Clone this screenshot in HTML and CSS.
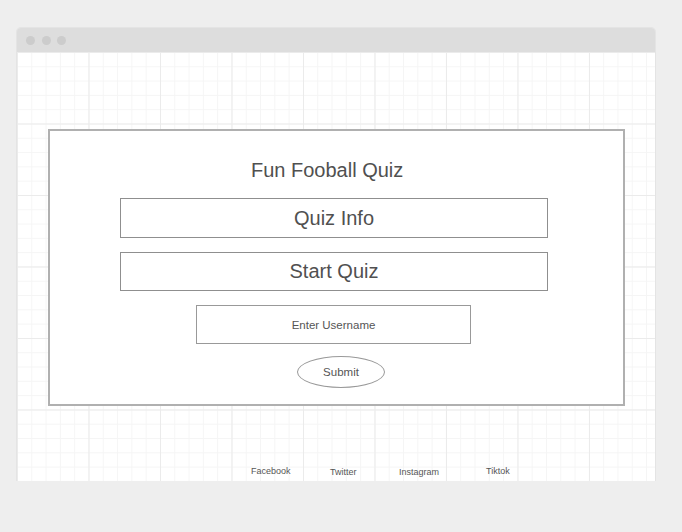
FILE: index.html
```html
<!DOCTYPE html>
<html>
<head>
<meta charset="utf-8">
<link rel="stylesheet" href="styles.css">
</head>
<body>
<div class="window">
  <div class="titlebar">
    <span class="dot"></span><span class="dot"></span><span class="dot"></span>
  </div>
  <div class="canvas">
    <div class="card">
      <h1 class="title">Fun Fooball Quiz</h1>
      <div class="big-btn">Quiz Info</div>
      <div class="big-btn start">Start Quiz</div>
      <div class="input">Enter Username</div>
      <div class="submit">Submit</div>
    </div>
    <div class="footer">
      <span class="link">Facebook</span>
      <span class="link low">Twitter</span>
      <span class="link low">Instagram</span>
      <span class="link">Tiktok</span>
    </div>
  </div>
</div>
</body>
</html>
```

FILE: styles.css
```css
html, body {
  margin: 0;
  padding: 0;
  background: #eeeeee;
  font-family: "Liberation Sans", Arial, sans-serif;
  color: #505050;
}
.window {
  margin: 28px 0 0 17px;
  width: 638px;
  height: 453px;
  border-radius: 4px 4px 0 0;
  overflow: hidden;
  box-shadow: 0 0 0 1px #e4e4e4;
  display: flex;
  flex-direction: column;
}
.titlebar {
  height: 24px;
  background: #dddddd;
  display: flex;
  align-items: center;
  padding-left: 9px;
  gap: 6.6px;
}
.dot {
  width: 9px;
  height: 9px;
  border-radius: 50%;
  background: #cccccc;
}
.canvas {
  flex: 1;
  background-color: #ffffff;
  background-image:
    linear-gradient(to right, #ebebeb 1px, transparent 1px),
    linear-gradient(to bottom, #ebebeb 1px, transparent 1px),
    linear-gradient(to right, #f5f5f5 1px, transparent 1px),
    linear-gradient(to bottom, #f5f5f5 1px, transparent 1px);
  background-size: 71.5px 71.5px, 71.5px 71.5px, 14.3px 14.3px, 14.3px 14.3px;
  display: flex;
  flex-direction: column;
}
.card {
  margin: 77px 0 0 31px;
  width: 573px;
  height: 273px;
  border: 2px solid #b0b0b0;
  background: #ffffff;
  display: flex;
  flex-direction: column;
  align-items: flex-start;
}
.title {
  margin: 27px 0 0 201px;
  font-size: 20px;
  line-height: 24px;
  font-weight: normal;
}
.big-btn {
  margin: 16px 0 0 70px;
  width: 426px;
  height: 38px;
  border: 1px solid #8f8f8f;
  font-size: 20px;
  line-height: 38px;
  text-align: center;
}
.big-btn.start {
  margin-top: 14px;
  height: 37px;
  line-height: 37px;
}
.input {
  margin: 14px 0 0 146px;
  width: 273px;
  height: 37px;
  border: 1px solid #999999;
  font-size: 11.5px;
  line-height: 39px;
  text-align: center;
  color: #555555;
  overflow: hidden;
}
.submit {
  margin: 12px 0 0 247px;
  width: 86px;
  height: 30px;
  border: 1px solid #999999;
  border-radius: 50%;
  font-size: 11.5px;
  line-height: 30px;
  text-align: center;
  color: #555555;
}
.footer {
  margin: 60px 0 0 234px;
  display: grid;
  grid-template-columns: 79px 69px 87px auto;
  align-items: start;
}
.link {
  font-size: 9px;
  line-height: 10px;
  color: #555555;
}
.link.low {
  margin-top: 1px;
}
```
